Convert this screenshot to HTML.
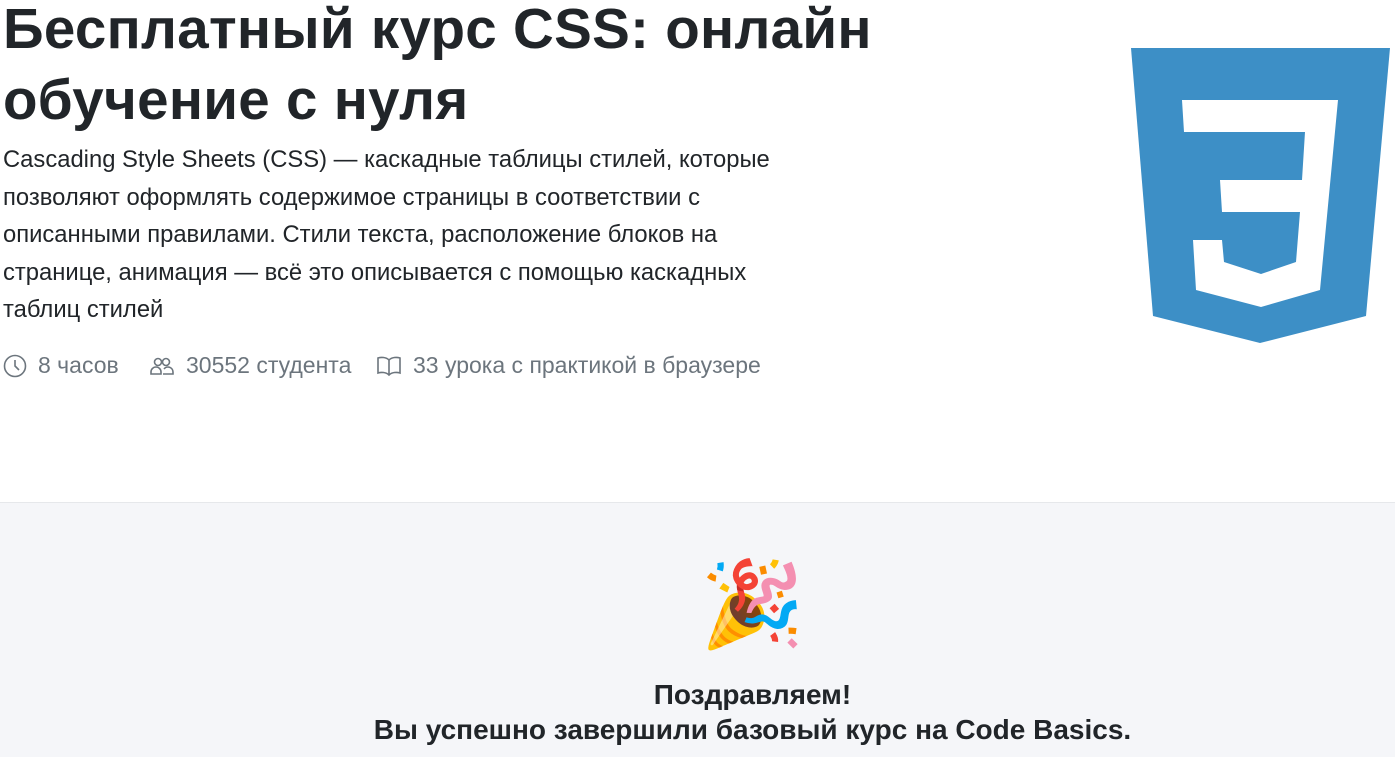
<!DOCTYPE html>
<html><head><meta charset="utf-8"><style>
body{margin:0;width:1395px;height:756px;overflow:hidden;font-family:"Liberation Sans","DejaVu Sans",sans-serif;background:#fff;color:#212529}
.top{position:relative;height:502px;background:#fff;border-bottom:1px solid #e6e8eb}
h1{position:absolute;left:3px;top:-7px;margin:0;font-size:56.5px;line-height:71px;font-weight:bold;letter-spacing:0.3px;white-space:nowrap}
p{position:absolute;left:3px;top:141px;margin:0;font-size:23.8px;line-height:37.5px;white-space:nowrap}
.meta{position:absolute;left:3px;top:352px;font-size:23px;color:#6c757d;height:30px}
.meta span{position:absolute;display:flex;align-items:center;white-space:nowrap;top:0}
.meta svg{margin-right:11px}
.bot{background:#f5f6f9;height:254px;text-align:center;position:relative}
.bot .t{position:absolute;left:110px;right:0;top:174px;font-size:28px;font-weight:bold;line-height:35px;color:#212529}
</style></head><body>
<div class="top">
<h1>Бесплатный курс CSS: онлайн<br>обучение с нуля</h1>
<p>Cascading Style Sheets (CSS) — каскадные таблицы стилей, которые<br>позволяют оформлять содержимое страницы в соответствии с<br>описанными правилами. Стили текста, расположение блоков на<br>странице, анимация — всё это описывается с помощью каскадных<br>таблиц стилей</p>
<div class="meta">
<span style="left:0"><svg width="24" height="24" viewBox="0 0 24 24" fill="none" stroke="#6c757d" stroke-width="1.6"><circle cx="12" cy="12" r="10.5"/><path d="M12 6v6l4 4"/></svg>8 часов</span>
<span style="left:146px"><svg width="26" height="24" viewBox="0 0 26 24" fill="none" stroke="#6c757d" stroke-width="1.6"><circle cx="9" cy="8" r="3.5"/><circle cx="17" cy="8" r="3.5"/><path d="M2 20v-2a5 5 0 0 1 10 0v2zM14 20h10v-2a5 5 0 0 0-9-3"/></svg>30552 студента</span>
<span style="left:373px"><svg width="26" height="24" viewBox="0 0 26 24" fill="none" stroke="#6c757d" stroke-width="1.6"><path d="M13 6v15M13 6C10 3 5 3 2 4v15c3-1 8-1 11 2 3-3 8-3 11-2V4c-3-1-8-1-11 2"/></svg>33 урока с практикой в браузере</span>
</div>
<svg style="position:absolute;left:0;top:0" width="1395" height="502">
<polygon points="1131,48 1390,48 1366,316 1260,343 1153,316" fill="#3d8fc6"/>
<polygon points="1182,100 1338,100 1320,290 1261,307 1196,290 1193,240 1222,240 1224,262 1261,274 1296,262 1300,212 1222,212 1220,180 1302,180 1305,132 1184,132" fill="#fff"/>
</svg>
</div>
<div class="bot">
<div style="position:absolute;left:110px;right:0;top:52px;font-size:84px;line-height:100px;font-family:'Noto Color Emoji',sans-serif">🎉</div>
<div class="t">Поздравляем!<br>Вы успешно завершили базовый курс на Code Basics.</div>
</div>
</body></html>
